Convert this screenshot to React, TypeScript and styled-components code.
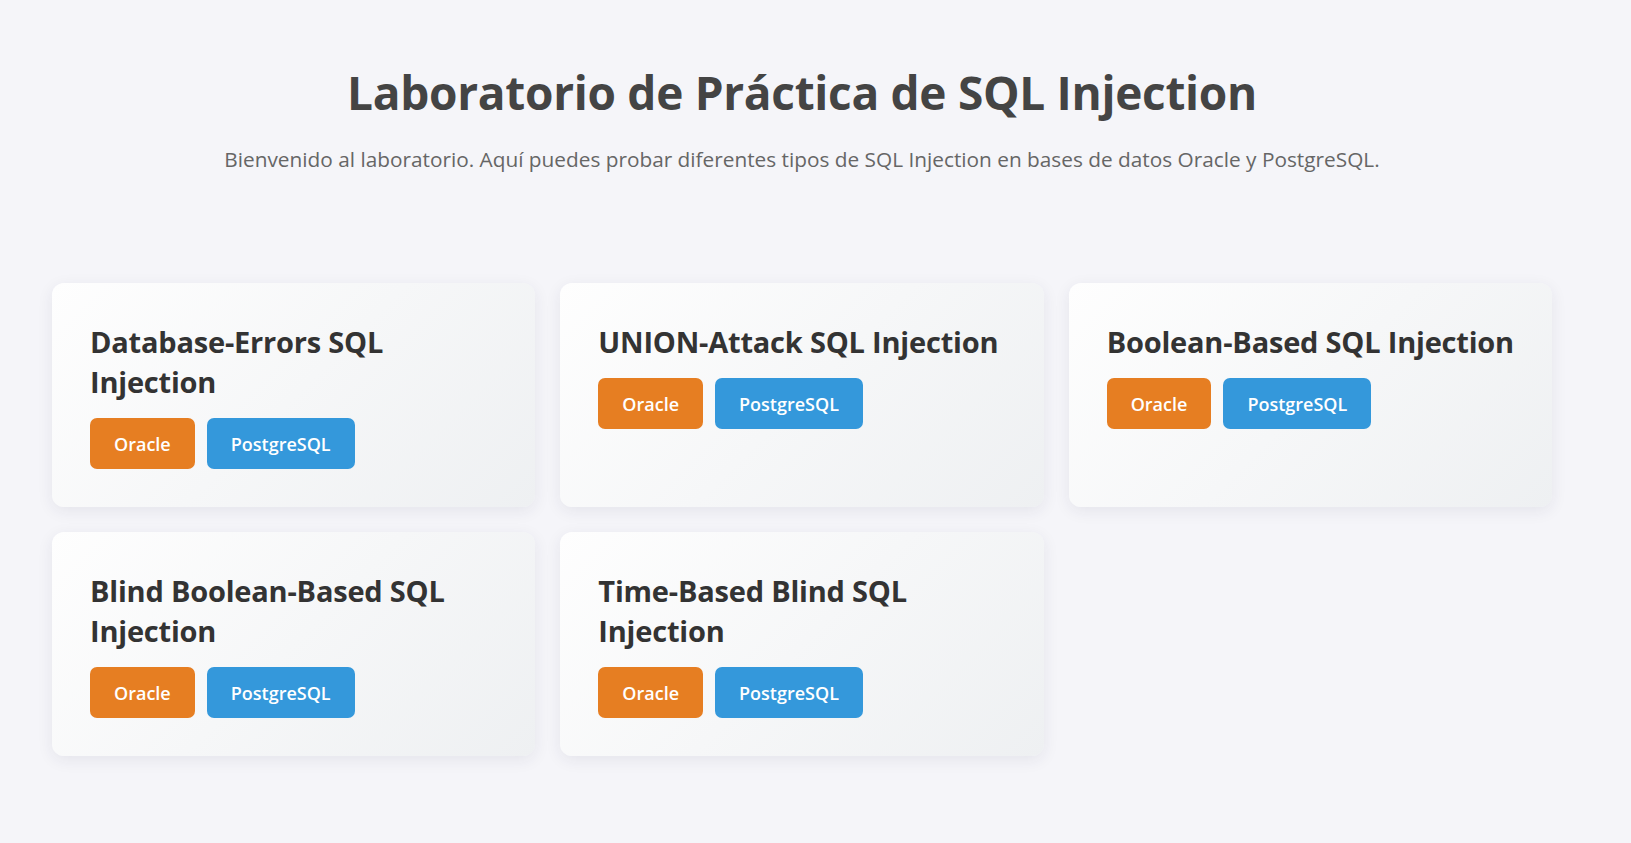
import React from "react";
import styled, { createGlobalStyle } from "styled-components";

const GlobalStyle = createGlobalStyle`
	body {
		margin: 0;
		background: #f5f5f9;
		font-family: "Segoe UI", "Open Sans", "Noto Sans", sans-serif;
	}
`;

type Lab = {
	title: string;
};

const labs: Lab[] = [
	{ title: "Database-Errors SQL Injection" },
	{ title: "UNION-Attack SQL Injection" },
	{ title: "Boolean-Based SQL Injection" },
	{ title: "Blind Boolean-Based SQL Injection" },
	{ title: "Time-Based Blind SQL Injection" },
];

function LabCard({ title }: Lab) {
	return (
		<Card>
			<CardTitle>{title}</CardTitle>
			<ButtonRow>
				<DbButton variant="oracle">Oracle</DbButton>
				<DbButton variant="postgres">PostgreSQL</DbButton>
			</ButtonRow>
		</Card>
	);
}

export default function App() {
	return (
		<>
			<GlobalStyle />
			<Page>
				<Header>
					<Title>Laboratorio de Práctica de SQL Injection</Title>
					<Subtitle>
						Bienvenido al laboratorio. Aquí puedes probar diferentes tipos de SQL
						Injection en bases de datos Oracle y PostgreSQL.
					</Subtitle>
				</Header>
				<Grid>
					{labs.map((lab) => (
						<LabCard key={lab.title} title={lab.title} />
					))}
				</Grid>
			</Page>
		</>
	);
}

const Page = styled.div`
	width: 1500px;
	margin-left: 52px;
	padding-top: 65px;
	padding-bottom: 60px;
`;

const Header = styled.header`
	text-align: center;
	margin-bottom: 109px;
`;

const Title = styled.h1`
	margin: 0;
	font-size: 46px;
	font-weight: 700;
	line-height: 1.2;
	color: #444;
	letter-spacing: -0.3px;
`;

const Subtitle = styled.p`
	margin: 25px 0 0;
	font-size: 20.8px;
	color: #666;
	line-height: 1.4;
`;

const Grid = styled.div`
	display: grid;
	grid-template-columns: repeat(3, 1fr);
	column-gap: 25px;
	row-gap: 25px;
`;

const Card = styled.div`
	box-sizing: border-box;
	padding: 39px 38px 38px;
	border-radius: 12px;
	background: linear-gradient(135deg, #fefefe 0%, #eef0f2 100%);
	box-shadow: 0 4px 16px rgba(40, 40, 80, 0.08);
`;

const CardTitle = styled.h2`
	margin: 0 0 16px;
	font-size: 29px;
	font-weight: 700;
	line-height: 40px;
	color: #333;
	letter-spacing: -0.2px;
`;

const ButtonRow = styled.div`
	display: flex;
	gap: 12px;
`;

const DbButton = styled.button<{ variant: "oracle" | "postgres" }>`
	height: 51px;
	padding: 0 24px;
	border: none;
	border-radius: 7px;
	font-family: inherit;
	font-size: 18px;
	font-weight: 600;
	color: #fff;
	cursor: pointer;
	background: ${(props) => (props.variant === "oracle" ? "#e67e22" : "#3498db")};
`;
